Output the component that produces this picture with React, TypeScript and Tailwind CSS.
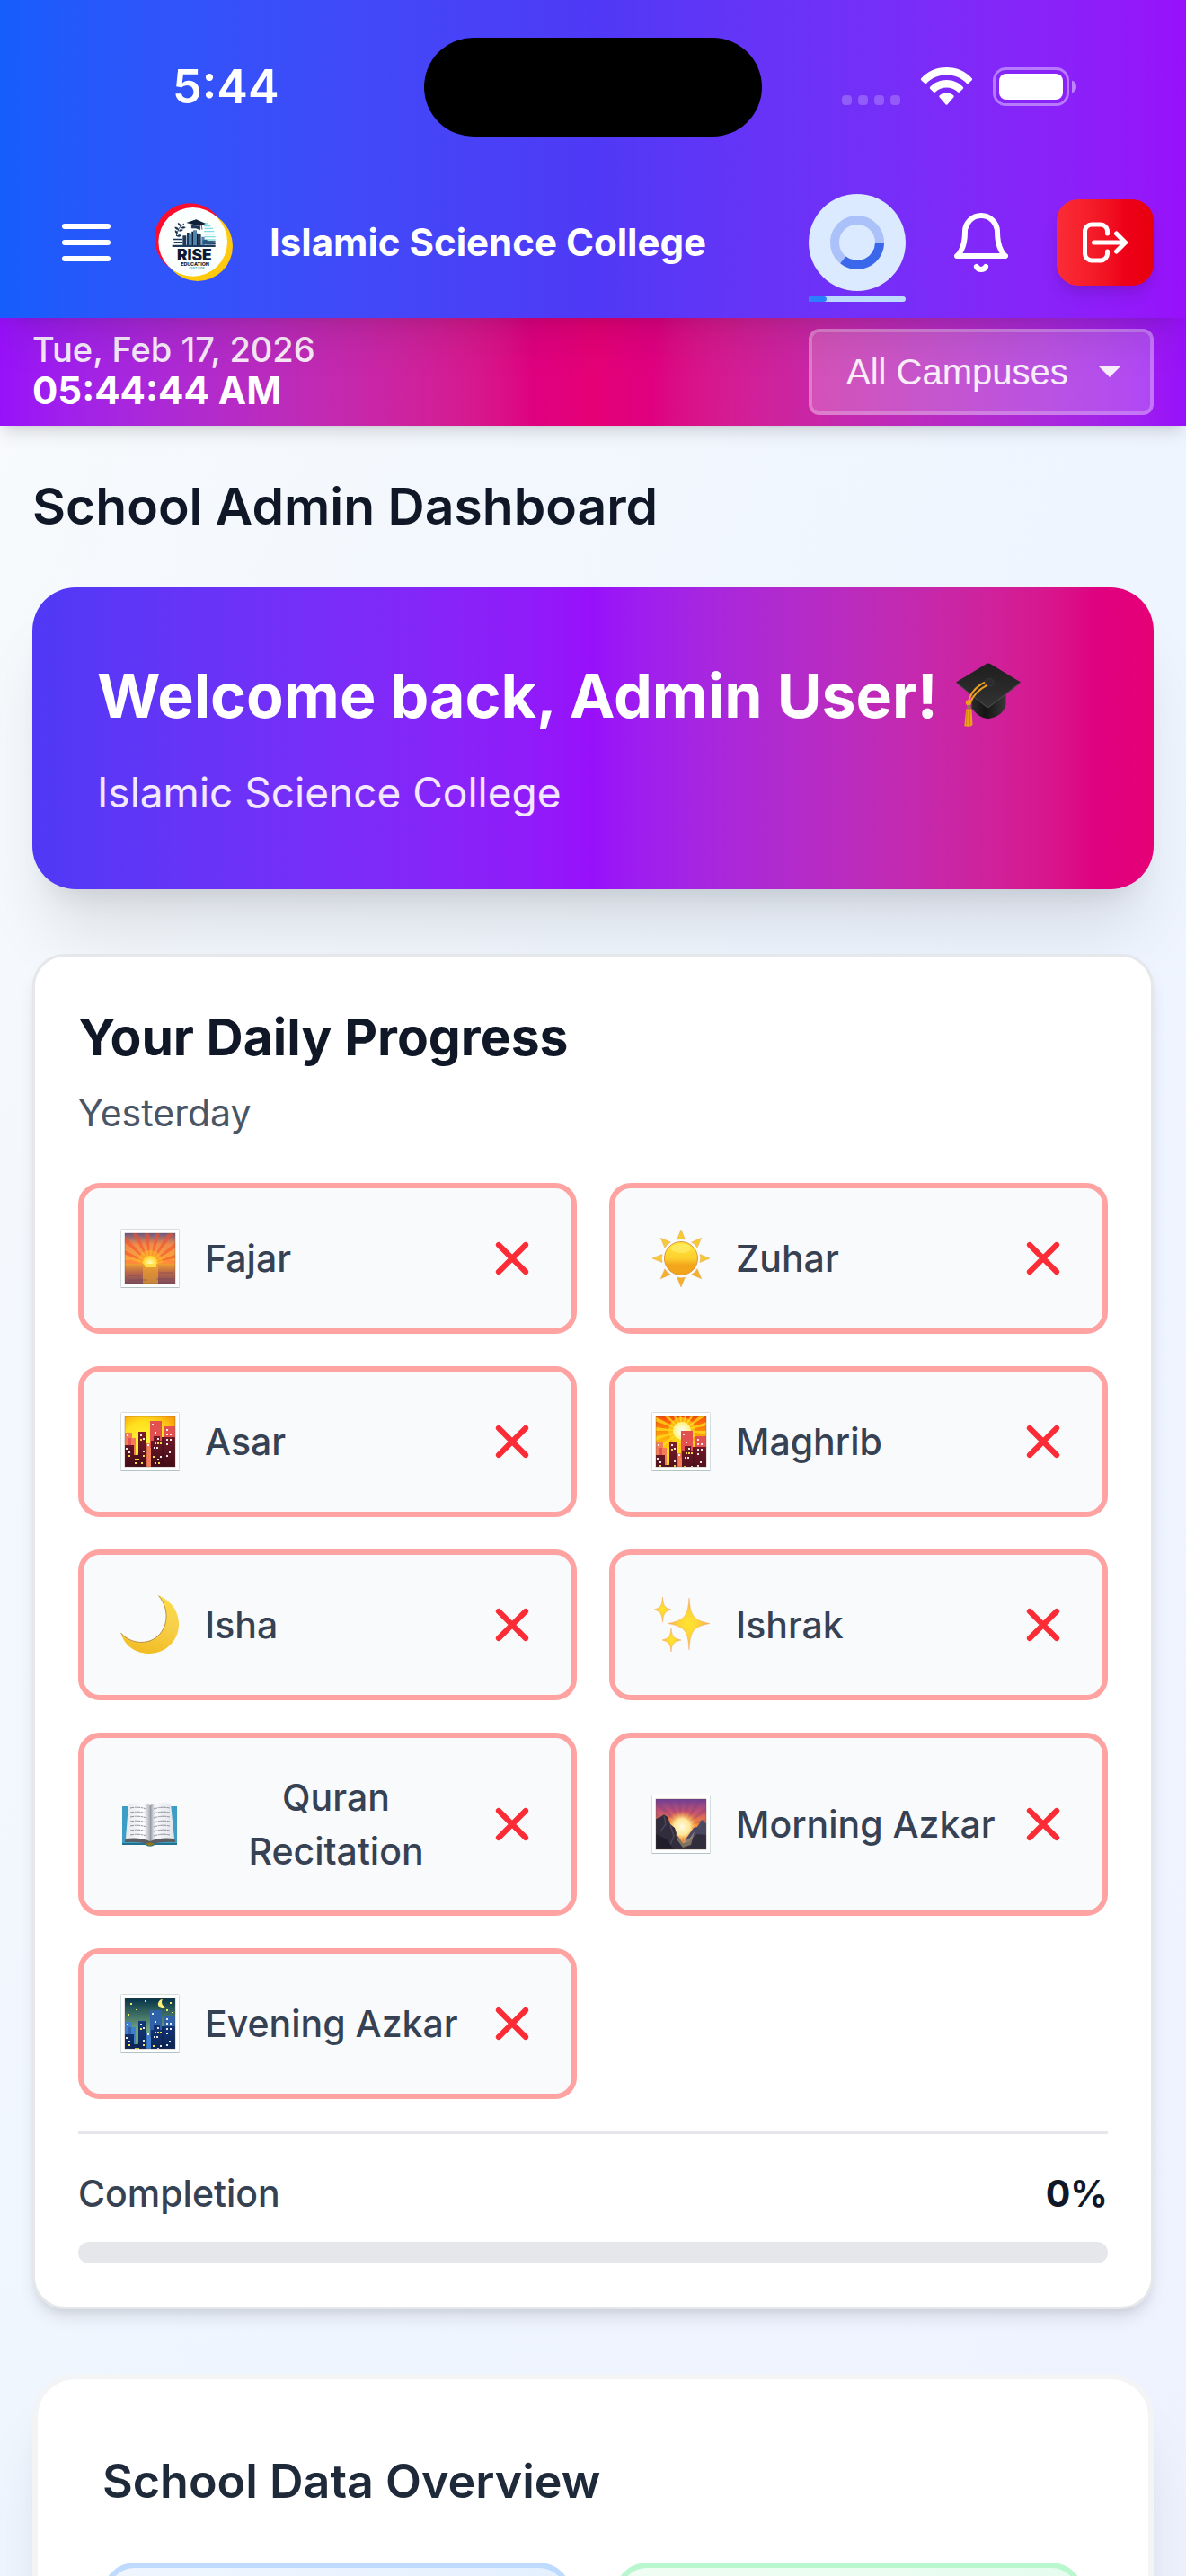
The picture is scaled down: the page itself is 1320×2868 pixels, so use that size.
import React from "react";

type Palette = {
  far: string;
  farEdge: string;
  near: string;
  nearEnd: string;
  lamp: string;
};

function Frame({ children }: { children: React.ReactNode }) {
  return (
    <svg viewBox="0 0 66 66" className="size-[66px]" aria-hidden="true">
      <rect x="0.5" y="0.5" width="65" height="65" rx="1" fill="#ffffff" stroke="#d5dede" />
      <path d="M0.5 65.5H65.5" stroke="#b4c3c5" />
      <svg x="5" y="5" width="56" height="56" viewBox="5 5 56 56">
        {children}
      </svg>
      <rect x="5" y="5" width="56" height="56" fill="none" stroke="#5b4a3a" strokeOpacity="0.35" />
    </svg>
  );
}

function Rays({ cx, cy, color, opacity }: { cx: number; cy: number; color: string; opacity: number }) {
  const spokes = Array.from({ length: 18 }, (_, i) => {
    const a = (i * 20 * Math.PI) / 180;
    const b = ((i * 20 + 8) * Math.PI) / 180;
    return `M${cx} ${cy}L${cx + 70 * Math.cos(a)} ${cy + 70 * Math.sin(a)}L${cx + 70 * Math.cos(b)} ${cy + 70 * Math.sin(b)}Z`;
  }).join("");
  return <path d={spokes} fill={color} opacity={opacity} />;
}

function SunriseIcon() {
  return (
    <Frame>
      <defs>
        <linearGradient id="dawnSky" x1="0" y1="0" x2="0" y2="1">
          <stop offset="0" stopColor="#6b5684" />
          <stop offset="0.35" stopColor="#f08a4b" />
          <stop offset="1" stopColor="#ffae33" />
        </linearGradient>
        <linearGradient id="dawnSea" x1="0" y1="0" x2="0" y2="1">
          <stop offset="0" stopColor="#f0a030" />
          <stop offset="0.45" stopColor="#b9654a" />
          <stop offset="1" stopColor="#7d4c5c" />
        </linearGradient>
        <radialGradient id="dawnSun">
          <stop offset="0" stopColor="#fffdb8" />
          <stop offset="1" stopColor="#ffd21f" />
        </radialGradient>
      </defs>
      <rect x="5" y="5" width="56" height="35" fill="url(#dawnSky)" />
      <Rays cx={33} cy={39} color="#f4512c" opacity={0.6} />
      <circle cx="33" cy="38" r="14" fill="#ffb627" opacity="0.55" />
      <path d="M5 36q6-3 11 0t11 3v2H5zM61 36q-6-3-11 0t-11 3v2h22z" fill="#ff8a3c" />
      <circle cx="33" cy="38.500" r="8.500" fill="url(#dawnSun)" />
      <rect x="5" y="39" width="56" height="22" fill="url(#dawnSea)" />
      <rect x="25" y="39" width="17" height="22" fill="#f0a52c" opacity="0.65" />
      <path d="M26 39h14v4H28z" fill="#ffe04a" />
      <path d="M8 52h15M43 49h15M10 57h20M40 56h18" stroke="#6a4358" strokeWidth="1" opacity="0.5" />
    </Frame>
  );
}

function City({ palette, drop }: { palette: Palette; drop: number }) {
  const id = `near${palette.near.slice(1)}`;
  return (
    <g>
      <defs>
        <linearGradient id={id} x1="0" y1="20" x2="0" y2="61" gradientUnits="userSpaceOnUse">
          <stop offset="0" stopColor={palette.near} />
          <stop offset="1" stopColor={palette.nearEnd} />
        </linearGradient>
      </defs>
      <g transform={`translate(0 ${drop})`}>
        <path d="M5 23h8v6h4v32H5z" fill={palette.farEdge} />
        <path d="M9 29h3v8H9z" fill={palette.far} />
        <path d="M29 35h6v30h-6z" fill={palette.farEdge} />
        <path d="M33 10h13v30H33zM49 16h12v20H49z" fill={palette.far} />
        <path d="M5 37h10v11h5V22h9v39H5z" fill={`url(#${id})`} />
        <path d="M34 32h3v-5h7v5h2v-4h15v33H34z" fill={`url(#${id})`} />
        <path d="M47 28v33M29 36v25M20 46v15" stroke="#000000" strokeOpacity="0.25" />
        <path
          d="M7 25h2v2H7zM35 13h2v2h-2zM38 22h2v2h-2zM51 19h2v2h-2zM51 24h2v2h-2zM55 24h2v2h-2zM22 25h2v2h-2zM25 29h2v2h-2zM30 36h2v2h-2zM41 29h2v2h-2zM51 30h2v2h-2zM55 30h2v2h-2zM51 35h2v2h-2zM37 39h2v2h-2zM40 39h2v2h-2zM54 44h2v2h-2zM51 48h2v2h-2zM6 40h2v2H6zM9 44h2v2H9zM25 43h2v2h-2zM44 49h2v2h-2zM41 52h2v2h-2z"
          fill="#ffffff"
          opacity="0.9"
        />
        <path
          d="M22 30h2v2h-2zM38 34h2v2h-2zM41 34h2v2h-2zM44 34h2v2h-2zM25 48h2v2h-2zM9 48h2v2H9zM16 52h2v2h-2zM19 52h2v2h-2zM36 49h2v2h-2zM16 56h2v2h-2zM23 56h2v2h-2zM38 56h2v2h-2zM42 56h2v2h-2z"
          fill={palette.lamp}
        />
      </g>
    </g>
  );
}

const duskPalette: Palette = {
  far: "#e2504f",
  farEdge: "#f27d58",
  near: "#7c1d2b",
  nearEnd: "#430c18",
  lamp: "#f5dd3c",
};

const nightPalette: Palette = {
  far: "#2f62a8",
  farEdge: "#3f7fd0",
  near: "#143a7c",
  nearEnd: "#0b1f4c",
  lamp: "#f7e04b",
};

function AfternoonCityIcon() {
  return (
    <Frame>
      <defs>
        <radialGradient id="afternoonSky" cx="0.4" cy="0.55" r="0.75">
          <stop offset="0" stopColor="#fff83a" />
          <stop offset="0.6" stopColor="#ffe01c" />
          <stop offset="1" stopColor="#fb9a0a" />
        </radialGradient>
      </defs>
      <rect x="5" y="5" width="56" height="56" fill="url(#afternoonSky)" />
      <City palette={duskPalette} drop={0} />
    </Frame>
  );
}

function SunsetCityIcon() {
  return (
    <Frame>
      <defs>
        <linearGradient id="sunsetSky" x1="0" y1="0" x2="0" y2="1">
          <stop offset="0" stopColor="#fb4d0c" />
          <stop offset="0.35" stopColor="#ff9c08" />
          <stop offset="0.7" stopColor="#ffd90f" />
        </linearGradient>
        <radialGradient id="sunsetSun">
          <stop offset="0" stopColor="#ffffff" />
          <stop offset="1" stopColor="#fff27a" />
        </radialGradient>
      </defs>
      <rect x="5" y="5" width="56" height="56" fill="url(#sunsetSky)" />
      <Rays cx={34} cy={21} color="#ffdf1a" opacity={0.75} />
      <circle cx="34" cy="21" r="15" fill="#ffe21f" opacity="0.6" />
      <circle cx="34" cy="21" r="10" fill="url(#sunsetSun)" />
      <City palette={duskPalette} drop={11} />
    </Frame>
  );
}

function NightCityIcon() {
  return (
    <Frame>
      <defs>
        <linearGradient id="nightSky" x1="0" y1="0" x2="0" y2="1">
          <stop offset="0" stopColor="#053349" />
          <stop offset="0.6" stopColor="#6fa07c" />
        </linearGradient>
      </defs>
      <rect x="5" y="5" width="56" height="56" fill="url(#nightSky)" />
      <path d="M47 6a5 5 0 1 0 3.500 8.500A5.500 5.500 0 0 1 47 6z" fill="#fff07a" />
      <path
        d="M11 10h2v2h-2zM27 7h2v2h-2zM55 9h2v2h-2zM17 17h1v1h-1zM8 22h2v2H8zM51 17h2v2h-2zM35 14h1v1h-1zM57 20h1v1h-1zM20 24h1v1h-1z"
        fill="#f5e96c"
      />
      <City palette={nightPalette} drop={8} />
    </Frame>
  );
}

function MountainIcon() {
  return (
    <Frame>
      <defs>
        <linearGradient id="peakSky" x1="0" y1="0" x2="0" y2="1">
          <stop offset="0" stopColor="#6c3f97" />
          <stop offset="0.25" stopColor="#c4526f" />
          <stop offset="0.5" stopColor="#fb8b34" />
        </linearGradient>
        <radialGradient id="peakSun">
          <stop offset="0" stopColor="#fffbe0" />
          <stop offset="0.5" stopColor="#ffe79a" />
          <stop offset="1" stopColor="#ff9a2e" stopOpacity="0" />
        </radialGradient>
      </defs>
      <rect x="5" y="5" width="56" height="56" fill="url(#peakSky)" />
      <Rays cx={34} cy={36} color="#7a3f86" opacity={0.3} />
      <circle cx="34" cy="36" r="18" fill="url(#peakSun)" />
      <path d="M38 50l9-13 4-1 5-8 5 4v29H36z" fill="#4a4763" />
      <path d="M5 27l5-2 4-3 4 3 3 8 5 4 3 9 6 8 6-1 10-9 10 1v16H5z" fill="#322d3c" />
      <path d="M26 40l3 7 6 6 8-5 5-7-4 15-9 3-6-8z" fill="#d9c58c" opacity="0.45" />
      <path d="M14 23l2 10-6 8M21 34l4 12-4 10M56 29l-3 9" stroke="#55506a" strokeWidth="1.500" fill="none" opacity="0.7" />
      <path d="M5 44l12 6 8 11H5z" fill="#211d2a" />
    </Frame>
  );
}

function SunIcon() {
  const beams = [0, 45, 90, 135, 180, 225, 270, 315];
  return (
    <svg viewBox="0 0 66 66" className="size-[66px]" aria-hidden="true">
      <defs>
        <linearGradient id="sunBody" x1="0" y1="0" x2="0" y2="1">
          <stop offset="0" stopColor="#ffe63a" />
          <stop offset="0.5" stopColor="#fdd02e" />
          <stop offset="0.7" stopColor="#f3a51b" />
          <stop offset="1" stopColor="#f2a419" />
        </linearGradient>
      </defs>
      {beams.map((deg) => (
        <path
          key={deg}
          d="M33 1l4.500 11q-4.500-1.500-9 0z"
          transform={`rotate(${deg} 33 33)`}
          fill={deg > 90 && deg < 270 ? "#f5b02a" : "#f8c930"}
          stroke="#e2a75a"
          strokeWidth="0.500"
        />
      ))}
      <circle cx="33" cy="33" r="18.500" fill="url(#sunBody)" stroke="#dd9440" />
      <ellipse cx="33" cy="22" rx="11" ry="5" fill="#fff27a" opacity="0.55" />
    </svg>
  );
}

function MoonIcon() {
  return (
    <svg viewBox="0 0 66 66" className="size-[66px]" aria-hidden="true">
      <defs>
        <linearGradient id="moonBody" x1="0.7" y1="0" x2="0.5" y2="1">
          <stop offset="0" stopColor="#fbdb45" />
          <stop offset="0.5" stopColor="#f7cf4a" />
          <stop offset="1" stopColor="#f2bd24" />
        </linearGradient>
      </defs>
      <path
        d="M42.500 0.500C57 6 65.500 19 65 33.500C64.500 51 50 65 32.500 65C17 65 4 56 0.500 42C9 52 24 55.500 36 49.500C52 41 57 18 42.500 0.500Z"
        fill="url(#moonBody)"
      />
      <path d="M42.500 0.500C57 18 52 41 36 49.500C24 55.500 9 52 0.500 42" fill="none" stroke="#b98f48" strokeWidth="1" />
    </svg>
  );
}

function SparklesIcon() {
  return (
    <svg viewBox="0 0 66 66" className="size-[66px]" aria-hidden="true">
      <defs>
        <radialGradient id="sparkle">
          <stop offset="0" stopColor="#ffe52e" />
          <stop offset="0.5" stopColor="#fdd33a" />
          <stop offset="1" stopColor="#f6a45c" />
        </radialGradient>
      </defs>
      <g fill="url(#sparkle)" stroke="#f3ac5c" strokeWidth="0.500">
        <path d="M42 3C43.500 22 46 28 65 31.500C46 35 43.500 40 42 61C40.500 40 38 35 18 31.500C38 28 40.500 22 42 3Z" />
        <path d="M12.500 2C13.200 12 15 14 22 16C15 18 13.200 21 12.500 30C11.800 21 10 18 3 16C10 14 11.800 12 12.500 2Z" />
        <path d="M22 37C22.700 46 25 48 33 50C25 52 22.700 54 22 63C21.300 54 19 52 12 50C19 48 21.300 46 22 37Z" />
      </g>
    </svg>
  );
}

function BookIcon() {
  const lines = [0, 1, 2, 3, 4, 5, 6];
  return (
    <svg viewBox="0 0 66 66" className="size-[66px]" aria-hidden="true">
      <defs>
        <linearGradient id="pageLeft" x1="0" y1="0" x2="1" y2="0">
          <stop offset="0" stopColor="#e6e8ec" />
          <stop offset="0.75" stopColor="#fdfdff" />
          <stop offset="1" stopColor="#a9adb5" />
        </linearGradient>
        <linearGradient id="pageRight" x1="0" y1="0" x2="1" y2="0">
          <stop offset="0" stopColor="#8b9099" />
          <stop offset="0.2" stopColor="#f8f8fb" />
          <stop offset="1" stopColor="#e2e4e9" />
        </linearGradient>
      </defs>
      <path d="M2 13h61v43H38q-5 3-10 0H2z" fill="#3d9dc4" />
      <path d="M2 54h61v2H38q-5 3-10 0H2z" fill="#23708f" />
      <path d="M5 51L8 47H58L61 51V53Q45 52 36 55H30Q20 52 5 53Z" fill="#5d5c60" />
      <path d="M9 10Q26 7 33 12V52Q22 47 6 49Z" fill="url(#pageLeft)" />
      <path d="M56 10Q40 7 33 12V52Q44 47 60 49Z" fill="url(#pageRight)" />
      {lines.map((i) => (
        <path
          key={i}
          d={`M11 ${15 + i * 5}Q20 ${13 + i * 5} 29 ${16 + i * 5}M37 ${16 + i * 5}Q46 ${13 + i * 5} 55 ${15 + i * 5}`}
          stroke="#8d919b"
          strokeWidth="1"
          strokeDasharray="4 0.800 2 0.600"
          fill="none"
        />
      ))}
      <path d="M28 55q5-3 10 0q-5 4-10 0z" fill="#8c7a1c" />
    </svg>
  );
}

function CapIcon() {
  return (
    <svg viewBox="0 0 70 70" className="size-[72px] shrink-0" role="img" aria-label="Graduation cap">
      <defs>
        <linearGradient id="capBoard" x1="0" y1="0" x2="0" y2="1">
          <stop offset="0" stopColor="#1e1e1f" />
          <stop offset="1" stopColor="#333334" />
        </linearGradient>
        <linearGradient id="capBase" x1="0" y1="0" x2="1" y2="0">
          <stop offset="0" stopColor="#2b2b2c" />
          <stop offset="0.4" stopColor="#141415" />
          <stop offset="1" stopColor="#39393a" />
        </linearGradient>
      </defs>
      <path d="M17 34V49Q27 62 37 60Q50 58 54 46V33L35 45Z" fill="url(#capBase)" />
      <path d="M0 21L33 1Q35 0 37 1L70 21L36 48Q34.500 49 33 48Z" fill="url(#capBoard)" />
      <path d="M1 22L33 47.500Q34.500 48.500 36 47.500L69 22" fill="none" stroke="#4b4b4c" strokeWidth="1" />
      <ellipse cx="36" cy="21" rx="5" ry="4" fill="#2c2c2e" stroke="#47474a" strokeWidth="0.500" />
      <path d="M31 21Q15 29 13.500 44M34 24Q20 31 15 44" fill="none" stroke="#efa01e" strokeWidth="2" />
      <circle cx="13.500" cy="43" r="3" fill="#efa01e" />
      <path d="M12 46h4v4h-4z" fill="#8b7a48" />
      <path d="M11 50h6l1 17q-4 3-9 1z" fill="#eda01c" />
      <path d="M12 52l-1 15M15 52v15" stroke="#c67b10" strokeWidth="0.800" />
    </svg>
  );
}

function Logo() {
  return (
    <svg viewBox="33 46 270 270" className="size-[90px] shrink-0" role="img" aria-label="Rise Education">
      <circle cx="157" cy="168" r="118" fill="#fb0d2b" />
      <circle cx="183" cy="193" r="117" fill="#ffc90e" />
      <circle cx="167" cy="179" r="115" fill="#fbfffe" />
      <path d="M206 118h10M204 126h22M206 134h28M204 144h34M206 153h34M206 162h36M208 172h34" stroke="#7fdbe4" strokeWidth="4" />
      <g fill="#1b3a5c">
        <path d="M100 168h32v5h-32zM104 178h28v5h-28zM98 189h144v7H98z" />
        <path d="M133 158h12v32h-12zM147 148h8v42h-8zM184 154h10v36h-10zM208 176h34v4h-34zM212 184h30v4h-30z" />
      </g>
      <path d="M155 150h8v40h-8zM168 140h12v50h-12zM196 162h10v28h-10z" fill="#4f84ad" />
      <path d="M163 144h5v46h-5zM180 150h5v40h-5z" fill="#0c1f38" />
      <path d="M200 174q10-6 16 0t16 0v14h-32z" fill="#2b567d" />
      <path d="M145 115L178 104L210 118L190 126Z" fill="#0f1f36" />
      <path d="M163 123q12 2 28 5v10q-14-8-28-5zM196 124l2 14" fill="#1d3556" stroke="#0f1f36" strokeWidth="2" />
      <path d="M112 160q4-30 26-42" fill="none" stroke="#17304f" strokeWidth="3" />
      <path
        d="M126 126q-10-2-8-10q8 2 8 10zM119 138q-10 0-12-8q10-1 12 8zM114 150q-6 0-6-9q8 1 6 9zM128 132q8 4 14-1q-6-6-14 1zM121 142q8 4 12-3q-8-4-12 3zM114 160q10 4 14-3q-8-4-14 3z"
        fill="#17304f"
        stroke="#17304f"
        strokeWidth="2"
      />
      <text x="172" y="241" textAnchor="middle" fontFamily="Inter, sans-serif" fontWeight="900" fontSize="52" fill="#0d1a33">
        RISE
      </text>
      <text x="174" y="259" textAnchor="middle" fontFamily="Inter, sans-serif" fontWeight="800" fontSize="16" fill="#0d1a33">
        EDUCATION
      </text>
      <text x="180" y="271" textAnchor="middle" fontFamily="Inter, sans-serif" fontWeight="600" fontSize="10" fill="#4aa3b5">
        EAST SIDE
      </text>
    </svg>
  );
}

function StatusIcons() {
  return (
    <svg viewBox="0 0 262 44" className="h-[44px] w-[262px]" role="img" aria-label="Wi-Fi and battery">
      <g fill="#ffffff" fillOpacity="0.22">
        <rect x="1" y="31" width="11" height="11" rx="4" />
        <rect x="19" y="31" width="11" height="11" rx="4" />
        <rect x="37" y="31" width="11" height="11" rx="4" />
        <rect x="55" y="31" width="11" height="11" rx="4" />
      </g>
      <g fill="#ffffff">
        <path d="M117.500 0C106 0 96 4.500 89 12.500Q88.500 13.500 89.500 14.500L93.500 18Q94.500 18.500 95.200 17.700C101 11.500 109 8.500 117.500 8.500S134 11.500 139.800 17.700Q140.500 18.500 141.500 18L145.500 14.500Q146.500 13.500 146 12.500C139 4.500 129 0 117.500 0Z" />
        <path d="M117.500 14C110 14 103.500 17 99 22Q98.300 23 99.300 24L103 27.500Q104 28.300 105 27.500C108.500 24 113 22.500 117.500 22.500S126.500 24 130 27.500Q131 28.300 132 27.500L135.700 24Q136.700 23 136 22C131.500 17 125 14 117.500 14Z" />
        <path d="M117.500 28.500C114 28.500 111.500 29.500 109.500 31.500Q108.800 32.300 109.600 33.200L116.500 41.300Q117.500 42.300 118.500 41.300L125.400 33.200Q126.200 32.300 125.500 31.500C123.500 29.500 121 28.500 117.500 28.500Z" />
      </g>
      <rect x="170.500" y="1.500" width="82" height="40" rx="13" fill="none" stroke="#ffffff" strokeOpacity="0.4" strokeWidth="3" />
      <rect x="176" y="7" width="71" height="29" rx="8" fill="#ffffff" />
      <path d="M257 14.500q5 2 5 7t-5 7z" fill="#ffffff" fillOpacity="0.45" />
    </svg>
  );
}

const tasks: { label: string; icon: React.ReactNode }[] = [
  { label: "Fajar", icon: <SunriseIcon /> },
  { label: "Zuhar", icon: <SunIcon /> },
  { label: "Asar", icon: <AfternoonCityIcon /> },
  { label: "Maghrib", icon: <SunsetCityIcon /> },
  { label: "Isha", icon: <MoonIcon /> },
  { label: "Ishrak", icon: <SparklesIcon /> },
  { label: "Quran Recitation", icon: <BookIcon /> },
  { label: "Morning Azkar", icon: <MountainIcon /> },
  { label: "Evening Azkar", icon: <NightCityIcon /> },
];

function TaskButton({ label, icon }: { label: string; icon: React.ReactNode }) {
  return (
    <button
      type="button"
      className="flex items-center justify-between gap-5 rounded-3xl border-6 border-[#ffa2a2] bg-gray-50 p-9 text-[41px] leading-[60px] font-medium text-gray-700"
    >
      <span className="flex items-center gap-6">
        <span className="flex h-[84px] w-[75px] shrink-0 items-center justify-center">{icon}</span>
        <span>{label}</span>
      </span>
      <svg viewBox="0 0 24 24" className="size-[60px] shrink-0 text-[#fb2c36]" fill="none" stroke="currentColor" strokeWidth="2.500" strokeLinecap="round" aria-hidden="true">
        <path d="M18 6L6 18M6 6l12 12" />
      </svg>
    </button>
  );
}

function Header() {
  return (
    <header className="relative z-20 shrink-0 bg-linear-to-r from-[#155dfc] via-[#4f39f6] to-[#9810fa] text-white shadow-[0_30px_45px_-9px_rgb(0_0_0/0.1),0_12px_18px_-12px_rgb(0_0_0/0.1)]">
      <div className="grid h-[198px] grid-cols-[1fr_376px_1fr] items-start pt-[42px]">
        <div className="flex h-[110px] items-center pl-[192px] text-[52px] font-semibold">5:44</div>
        <div className="h-[110px] rounded-full bg-black" />
        <div className="flex h-[110px] items-center justify-end pr-[122px]">
          <StatusIcons />
        </div>
      </div>
      <div className="flex items-center justify-between px-9 pt-[18px] pb-[30px]">
        <div className="flex items-center">
          <button type="button" aria-label="Open menu" className="flex h-[108px] w-[120px] items-center justify-center">
            <svg viewBox="0 0 24 24" className="size-[72px]" fill="none" stroke="currentColor" strokeWidth="2" strokeLinecap="round" aria-hidden="true">
              <path d="M4 6h16M4 12h16M4 18h16" />
            </svg>
          </button>
          <div className="ml-3.5 flex items-center gap-10">
            <Logo />
            <span className="text-[42px] leading-[60px] font-bold">Islamic Science College</span>
          </div>
        </div>
        <div className="flex items-center gap-12">
          <div className="relative flex size-[108px] items-center justify-center rounded-full bg-blue-100">
            <svg viewBox="0 0 60 60" className="size-[60px]" fill="none" strokeWidth="10" role="img" aria-label="Loading">
              <circle cx="30" cy="30" r="25" stroke="#abc1fa" />
              <path d="M55 30A25 25 0 0 1 14.300 49.400" stroke="#3b67ea" />
            </svg>
            <div className="absolute inset-x-0 top-[114px] h-1.5 rounded-full bg-[#bedbff]">
              <div className="h-full w-5 rounded-full bg-[#2b7fff]" />
            </div>
          </div>
          <button type="button" aria-label="Notifications" className="flex items-center justify-center">
            <svg viewBox="0 0 24 24" className="size-[72px]" fill="none" stroke="currentColor" strokeWidth="2" strokeLinecap="round" strokeLinejoin="round" aria-hidden="true">
              <path d="M6 8a6 6 0 0 1 12 0c0 7 3 9 3 9H3s3-2 3-9" />
              <path d="M10.300 21a1.940 1.940 0 0 0 3.400 0" />
            </svg>
          </button>
          <button
            type="button"
            aria-label="Log out"
            className="flex h-24 w-[108px] items-center justify-center rounded-3xl bg-[linear-gradient(to_right_in_oklab,#fb2c36,#ee0019_70%,#e7000b)] shadow-[0_12px_18px_-3px_rgb(0_0_0/0.1),0_6px_12px_-6px_rgb(0_0_0/0.1)]"
          >
            <svg viewBox="0 0 24 24" className="size-[60px]" fill="none" stroke="currentColor" strokeWidth="2" strokeLinecap="round" strokeLinejoin="round" aria-hidden="true">
              <path d="M17 16l4-4m0 0l-4-4m4 4H7m6 4v1a3 3 0 01-3 3H6a3 3 0 01-3-3V7a3 3 0 013-3h4a3 3 0 013 3v1" />
            </svg>
          </button>
        </div>
      </div>
    </header>
  );
}

function InfoBar() {
  return (
    <div className="relative z-10 flex h-[120px] shrink-0 items-center justify-between bg-[linear-gradient(to_right_in_oklab,#9810fa,#df0080_45%,#e60076_50%,#df0080_55%,#9810fa)] px-9 text-white shadow-[0_12px_18px_-3px_rgb(0_0_0/0.1),0_6px_12px_-6px_rgb(0_0_0/0.1)]">
      <div className="pb-1 leading-[45px]">
        <div className="text-[38px] font-medium opacity-90">Tue, Feb 17, 2026</div>
        <div className="text-[42px] font-bold">05:44:44 AM</div>
      </div>
      <div className="relative z-30">
        <select
          aria-label="Campus"
          className="h-24 w-96 appearance-none rounded-xl border-4 border-white/40 bg-white/20 bg-clip-padding pl-[38px] font-['Liberation_Sans',sans-serif] text-[40px] text-white/90"
        >
          <option>All Campuses</option>
        </select>
        <svg viewBox="0 0 24 12" className="pointer-events-none absolute top-[42px] right-[37px] h-3 w-6 text-white/90" fill="currentColor" aria-hidden="true">
          <path d="M0 0h24L12 12z" />
        </svg>
      </div>
    </div>
  );
}

export default function App() {
  return (
    <div className="flex h-screen flex-col overflow-hidden bg-linear-to-br from-gray-50 via-blue-50 to-indigo-50 font-['Inter',sans-serif]">
      <Header />
      <InfoBar />
      <main className="min-h-0 flex-1 overflow-y-auto px-9 py-12 [scrollbar-width:none]">
        <h1 className="text-[57px] leading-[84px] font-semibold text-gray-900">School Admin Dashboard</h1>

        <section className="mt-12 rounded-[48px] bg-[linear-gradient(to_right_in_oklab,#4f39f6,#9810fa_50%,#df0080_95%,#e60076)] p-[72px] shadow-[0_60px_75px_-15px_rgb(0_0_0/0.1),0_24px_30px_-18px_rgb(0_0_0/0.1)]">
          <h2 className="flex items-center gap-5 text-[68px] leading-[96px] font-bold text-white">
            Welcome back, Admin User!
            <CapIcon />
          </h2>
          <p className="mt-6 text-[46px] leading-[72px] text-purple-100">Islamic Science College</p>
        </section>

        <section className="mt-[72px] rounded-[36px] border-3 border-gray-200 bg-white p-12 shadow-[0_12px_18px_-3px_rgb(0_0_0/0.1),0_6px_12px_-6px_rgb(0_0_0/0.1)]">
          <h2 className="text-[57px] leading-[84px] font-bold text-gray-900">Your Daily Progress</h2>
          <p className="mt-3 text-[41px] leading-[60px] text-gray-600">Yesterday</p>
          <div className="mt-12 grid grid-cols-2 gap-9">
            {tasks.map((task) => (
              <TaskButton key={task.label} {...task} />
            ))}
          </div>
          <div className="mt-9 border-t-3 border-gray-200 pt-9">
            <div className="flex items-center justify-between text-[41px] leading-[60px]">
              <span className="font-medium text-gray-700">Completion</span>
              <span className="font-bold text-gray-900">0%</span>
            </div>
            <div role="progressbar" aria-label="Completion" aria-valuenow={0} aria-valuemin={0} aria-valuemax={100} className="mt-6 h-6 rounded-full bg-gray-200" />
          </div>
        </section>

        <section className="mt-[72px] rounded-[48px] border-6 border-gray-100 bg-white p-[72px] shadow-[0_60px_75px_-15px_rgb(0_0_0/0.1),0_24px_30px_-18px_rgb(0_0_0/0.1)]">
          <h2 className="text-[52px] leading-[84px] font-semibold text-gray-800">School Data Overview</h2>
          <div className="mt-12 grid grid-cols-2 gap-12">
            <div className="h-64 rounded-[36px] border-6 border-[#bedbff] bg-linear-to-br from-blue-50 to-blue-100" />
            <div className="h-64 rounded-[36px] border-6 border-[#b9f8cf] bg-linear-to-br from-green-50 to-green-100" />
          </div>
        </section>
      </main>
    </div>
  );
}
